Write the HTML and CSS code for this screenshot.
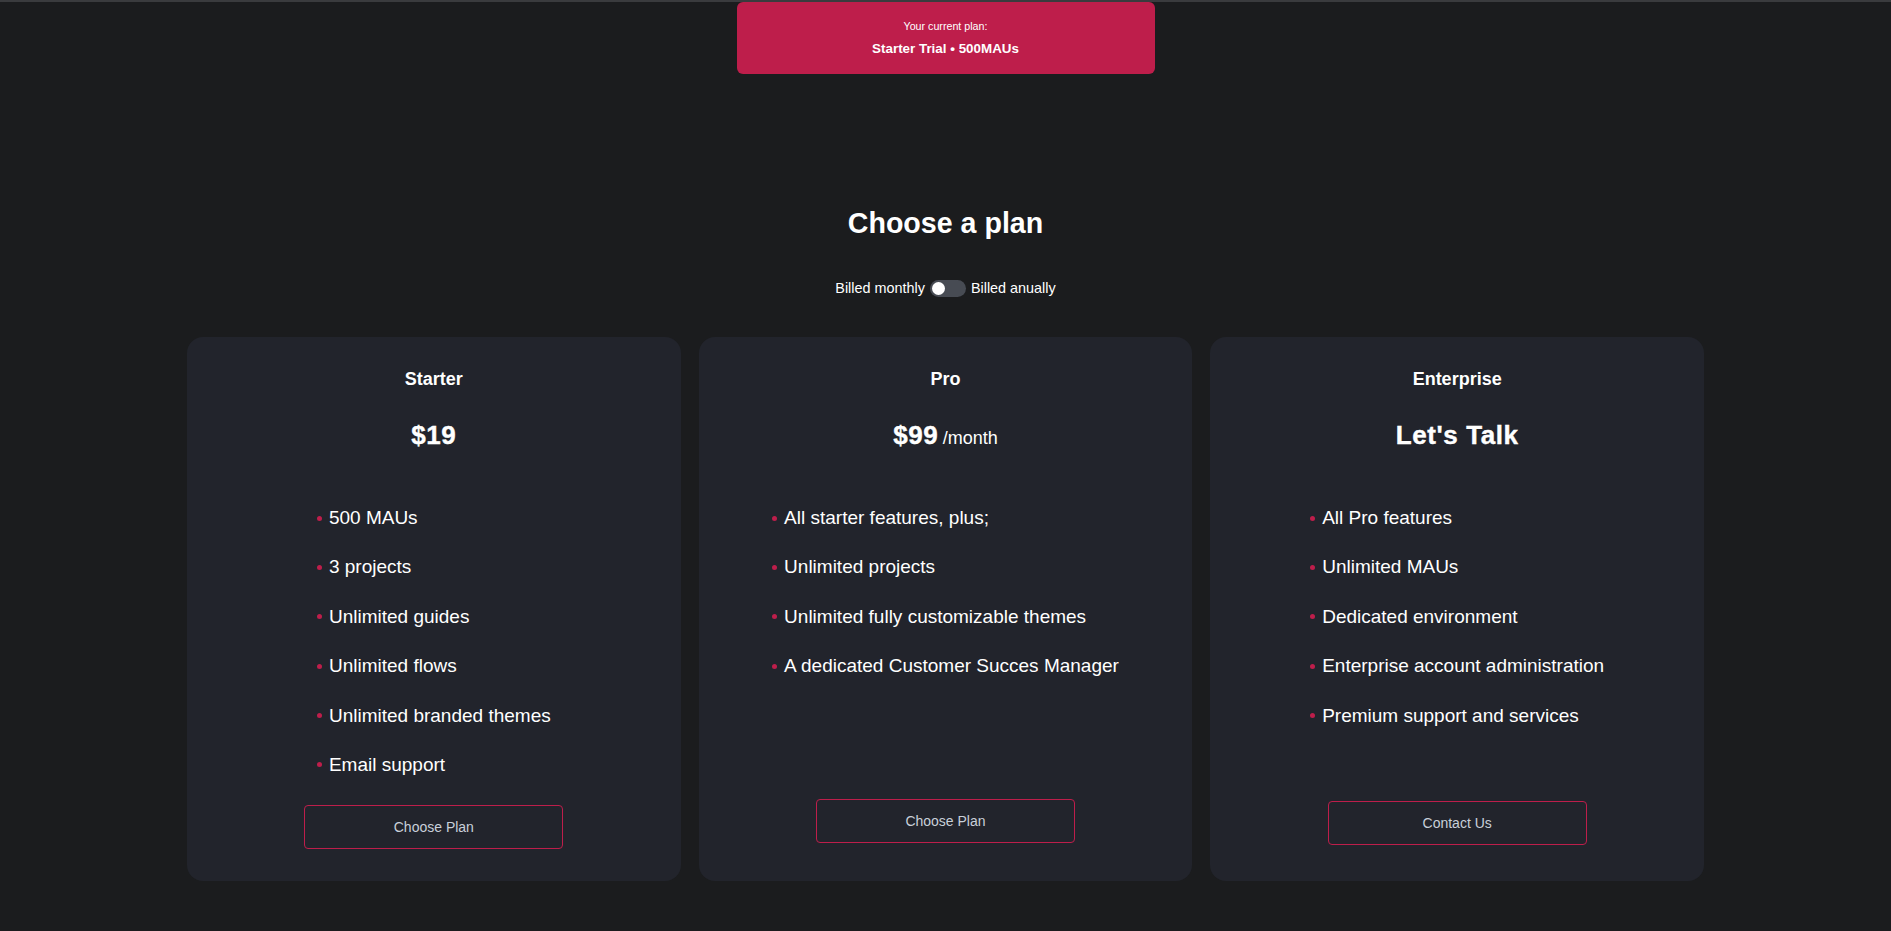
FILE: index.html
```html
<!DOCTYPE html>
<html lang="en">
<head>
<meta charset="utf-8">
<title>Choose a plan</title>
<link rel="stylesheet" href="styles.css">
</head>
<body>
<div class="topline"></div>
<div class="banner">
  <div class="banner-label">Your current plan:</div>
  <div class="banner-plan">Starter Trial • 500MAUs</div>
</div>

<h1 class="heading">Choose a plan</h1>

<div class="billing">
  <span>Billed monthly</span>
  <span class="toggle"><span class="knob"></span></span>
  <span>Billed anually</span>
</div>

<div class="plans">
  <div class="card card-starter">
    <div class="card-title">Starter</div>
    <div class="price"><span class="amount">$19</span></div>
    <ul class="features">
      <li>500 MAUs</li>
      <li>3 projects</li>
      <li>Unlimited guides</li>
      <li>Unlimited flows</li>
      <li>Unlimited branded themes</li>
      <li>Email support</li>
    </ul>
    <button class="plan-btn">Choose Plan</button>
  </div>

  <div class="card card-pro">
    <div class="card-title">Pro</div>
    <div class="price"><span class="amount">$99</span> <span class="per">/month</span></div>
    <ul class="features">
      <li>All starter features, plus;</li>
      <li>Unlimited projects</li>
      <li>Unlimited fully customizable themes</li>
      <li>A dedicated Customer Succes Manager</li>
    </ul>
    <button class="plan-btn">Choose Plan</button>
  </div>

  <div class="card card-enterprise">
    <div class="card-title">Enterprise</div>
    <div class="price"><span class="amount">Let's Talk</span></div>
    <ul class="features">
      <li>All Pro features</li>
      <li>Unlimited MAUs</li>
      <li>Dedicated environment</li>
      <li>Enterprise account administration</li>
      <li>Premium support and services</li>
    </ul>
    <button class="plan-btn">Contact Us</button>
  </div>
</div>
</body>
</html>
```

FILE: styles.css
```css
* { box-sizing: border-box; }

html, body {
  margin: 0;
  padding: 0;
  background: #1b1c1e;
  color: #ffffff;
  font-family: "Liberation Sans", Arial, sans-serif;
}

body { min-height: 931px; }

.topline {
  height: 2px;
  background: #3a3b3e;
}

.banner {
  width: 418px;
  height: 72px;
  margin: 0 auto;
  background: #be1e4b;
  border-radius: 6px;
  padding-top: 16px;
  text-align: center;
  color: #ffffff;
}

.banner-label {
  font-size: 10.7px;
  line-height: 16px;
}

.banner-plan {
  margin-top: 6px;
  font-size: 13.4px;
  line-height: 18px;
  font-weight: bold;
}

.heading {
  margin: 132px 0 0;
  text-align: center;
  font-size: 28.6px;
  line-height: 34px;
  font-weight: bold;
}

.billing {
  margin-top: 38px;
  height: 20px;
  display: flex;
  justify-content: center;
  align-items: center;
  gap: 5px;
  font-size: 14.4px;
}

.toggle {
  width: 36px;
  height: 17px;
  border-radius: 9px;
  background: #474b53;
  padding: 2px;
  display: flex;
  align-items: center;
}

.knob {
  width: 13px;
  height: 13px;
  border-radius: 50%;
  background: #ffffff;
}

.plans {
  width: 1517px;
  margin: 39px auto 0;
  display: grid;
  grid-template-columns: repeat(3, 1fr);
  gap: 18px;
}

.card {
  height: 544px;
  background: #22242c;
  border-radius: 16px;
  padding-top: 30px;
  display: flex;
  flex-direction: column;
  align-items: center;
}

.card-title {
  font-size: 18px;
  line-height: 24px;
  font-weight: bold;
}

.price {
  margin-top: 26px;
  line-height: 36px;
}

.amount {
  font-size: 26px;
  font-weight: bold;
  letter-spacing: 0.6px;
  -webkit-text-stroke: 0.4px #ffffff;
}

.per {
  font-size: 18px;
}

.features {
  list-style: none;
  margin: 50px 0 0;
  padding: 0;
  display: flex;
  flex-direction: column;
  gap: 27.4px;
}

.features li {
  display: flex;
  align-items: center;
  font-size: 19px;
  line-height: 22px;
}

.features li::before {
  content: "";
  width: 5px;
  height: 5px;
  border-radius: 50%;
  background: #be1e4b;
  margin-right: 7px;
  flex: none;
}

.plan-btn {
  margin-top: auto;
  width: 259px;
  height: 44px;
  background: transparent;
  border: 1px solid #be1e4b;
  border-radius: 4px;
  color: #c9d0da;
  font-family: "Liberation Sans", Arial, sans-serif;
  font-size: 14px;
}

.card-starter .plan-btn { margin-bottom: 32px; }
.card-pro .plan-btn { margin-bottom: 38px; }
.card-enterprise .plan-btn { margin-bottom: 36px; }
```
